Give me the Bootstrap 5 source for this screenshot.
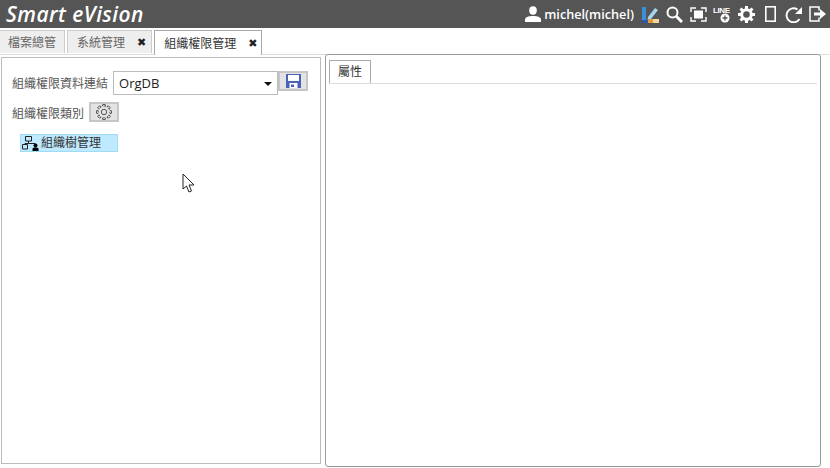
<!DOCTYPE html>
<html lang="zh-Hant"><head><meta charset="utf-8">
<link href="https://cdn.jsdelivr.net/npm/bootstrap@5.3.0/dist/css/bootstrap.min.css" rel="stylesheet">
<script src="https://cdn.jsdelivr.net/npm/bootstrap@5.3.0/dist/js/bootstrap.bundle.min.js"></script>
<style>
html,body{height:100%;overflow:hidden}
body{font-family:"Open Sans","Noto Sans CJK TC",sans-serif;font-size:12px;color:#333;background:#fff;line-height:1.2}
.top-bar{height:28px;background:#555;color:#fff}
.brand-name{font:italic 600 21px/29px "Open Sans",sans-serif;padding-left:6px;letter-spacing:.45px}
.user-name{font:600 12.7px "Open Sans",sans-serif;color:#fff;margin-left:3px;margin-right:4px;white-space:nowrap}
.tool-cell{width:24px;height:28px;display:flex;align-items:center;justify-content:center;flex:none}
.tool-ic{display:block;flex:none}
.tab-row{height:25px;margin-top:2px;gap:2px;border-bottom:1px solid #ddd}
.tab-item{height:23px;background:#eee;border:1px solid #ccc;border-bottom:0;color:#666;padding:0 5px 0 9px;line-height:21px;display:flex;gap:12px;align-items:center}
.tab-first{margin-left:-1px;padding:0 8px}
.tab-item.on{background:#fff;border-color:#aaa;color:#333;height:25px;position:relative;padding:0 4px 0 9px}
.tab-close{font:700 11px "DejaVu Sans",sans-serif;color:#222}
.work-row{height:412px;padding:0 0 0 1px;gap:4px}
.left-pane{width:320px;height:407px;border:1px solid #bbb;padding:13px 10px 0 10px;margin-top:2px}
.right-pane{width:496px;height:413px;border:1px solid #999;border-radius:3px;padding:5px 3px 0 3px;margin-top:-1px;position:relative}
.field-lab{color:#555;white-space:nowrap}
.lab-one{padding-top:2px}
.lab-two{padding-top:4px}
.select-box{width:165px;height:24px;border:1px solid #bbb;background:#fff;margin-left:5px;padding:2px 5px 0;font-size:13px;color:#222}
.select-arrow{width:0;height:0;border-left:4px solid transparent;border-right:4px solid transparent;border-top:4px solid #111}
.icon-box{background:#e3e3e3;border:2px solid #c6c6c6;display:flex;align-items:center;justify-content:center}
.save-box{width:30px;height:20px;align-self:flex-start}
.gear-box{width:30px;height:20px;margin-left:5px}
.tree-node{width:98px;height:18px;background:#bfe9ff;border:1px solid #9fdcf5;margin:12px 0 0 8px;gap:2px;padding-left:1px;color:#333}
.prop-tabs{height:24px;border-bottom:1px solid #ddd}
.prop-tab{width:42px;height:23px;border:1px solid #aaa;border-bottom:0;text-align:center;line-height:21px;color:#333}
.row-one{height:24px}
.row-two{height:20px;margin-top:7px}
.cursor-ic{position:absolute;left:182px;top:173px}
</style></head><body>
<header class="top-bar d-flex align-items-center">
<div class="brand-name flex-grow-1">Smart eVision</div>
<svg class="tool-ic" width="16" height="16" viewBox="0 0 16 16"><ellipse cx="8" cy="4.500" rx="3.800" ry="4.200" fill="#fff"/><path d="M0 16v-2c0-3 3-4 8-4s8 1 8 4v2z" fill="#fff"/></svg>
<span class="user-name">michel(michel)</span>
<div class="d-flex align-items-center">
<span class="tool-cell"><svg class="tool-ic" width="17" height="17" viewBox="0 0 17 17"><path d="M0 1h4v15H0z" fill="#3b8fd6"/><path d="m6 11 7-9 3 2-7 9-3.500 1z" fill="#a8d4ee"/><path d="M6 13h5v4H6z" fill="#e09a3c"/><path d="M11 13h6v4h-6z" fill="#f0d8a0"/><path d="M0 14h6v3H0z" fill="#2f57a8"/></svg></span>
<span class="tool-cell"><svg class="tool-ic" width="17" height="17" viewBox="0 0 17 17"><circle cx="6.500" cy="6.500" r="5" fill="none" stroke="#fff" stroke-width="2"/><path d="m10.500 10.500 5.500 5.500" stroke="#fff" stroke-width="3"/></svg></span>
<span class="tool-cell"><svg class="tool-ic" width="17" height="15" viewBox="0 0 17 15"><path d="M1 5V1h5M11 1h5v4M16 10v4h-5M6 14H1v-4" fill="none" stroke="#fff" stroke-width="1.400"/><path d="M4 3.500h9v8H4z" fill="#fff"/></svg></span>
<span class="tool-cell"><svg class="tool-ic" width="18" height="17" viewBox="0 0 18 17"><text x="0" y="7" font-size="8" font-weight="700" fill="#fff" font-family="Liberation Sans" textLength="17">LINE</text><circle cx="12" cy="12" r="4.500" fill="#fff"/><path d="M12 9.500v5M9.500 12h5" stroke="#555" stroke-width="1.300"/></svg></span>
<span class="tool-cell"><svg class="tool-ic" width="17" height="17" viewBox="0 0 17 17"><circle cx="8.500" cy="8.500" r="4.800" fill="none" stroke="#fff" stroke-width="3"/><path d="M8.500 0v3.500M8.500 13.500V17M0 8.500h3.500M13.500 8.500H17M2.500 2.500 5 5M12 12l2.500 2.500M2.500 14.500 5 12M12 5l2.500-2.500" stroke="#fff" stroke-width="3"/></svg></span>
<span class="tool-cell"><svg class="tool-ic" width="11" height="16" viewBox="0 0 11 16"><rect x=".8" y=".8" width="9.400" height="14.400" fill="none" stroke="#fff" stroke-width="1.600"/></svg></span>
<span class="tool-cell"><svg class="tool-ic" width="18" height="17" viewBox="0 0 18 17"><path d="M14.500 13A7 7 0 1 1 12.500 3.500" fill="none" stroke="#fff" stroke-width="1.900"/><path d="M17 1v7h-7z" fill="#fff"/></svg></span>
<span class="tool-cell"><svg class="tool-ic" width="18" height="16" viewBox="0 0 18 16"><path d="M10 4.500V1H1v14h9v-3.500" fill="none" stroke="#fff" stroke-width="1.500"/><path d="M5 6.500h6V3l6 5-6 5V9.500H5z" fill="#fff"/></svg></span>
</div>
</header>
<nav class="tab-row d-flex">
<div class="tab-item tab-first">檔案總管</div>
<div class="tab-item">系統管理<span class="tab-close">✖</span></div>
<div class="tab-item on">組織權限管理<span class="tab-close">✖</span></div>
</nav>
<main class="work-row d-flex">
<section class="left-pane">
<div class="row-one d-flex">
<span class="field-lab lab-one align-self-center">組織權限資料連結</span>
<div class="select-box d-flex align-items-center justify-content-between">OrgDB<i class="select-arrow"></i></div>
<div class="icon-box save-box"><svg width="15" height="14" viewBox="0 0 15 14"><path d="M0 0h15v14H0z" fill="#4a63b8"/><path d="M2 1h11v6H2z" fill="#fff"/><path d="M3.500 9h8v5h-8z" fill="#fff"/><path d="M5 10.500h3V13H5z" fill="#4a63b8"/></svg></div>
</div>
<div class="row-two d-flex align-items-center">
<span class="field-lab lab-two">組織權限類別</span>
<div class="icon-box gear-box"><svg width="16" height="16" viewBox="0 0 16 16" fill="none" stroke="#333" stroke-width=".8"><defs><path id="gear-tooth" d="M6.300 2.300 6.800.5h2.400l.5 1.800"/></defs><circle cx="8" cy="8" r="2.700"/><circle cx="8" cy="8" r="5.800" stroke-dasharray="1.900 2.650" stroke-dashoffset="1"/><use href="#gear-tooth"/><use href="#gear-tooth" transform="rotate(45 8 8)"/><use href="#gear-tooth" transform="rotate(90 8 8)"/><use href="#gear-tooth" transform="rotate(135 8 8)"/><use href="#gear-tooth" transform="rotate(180 8 8)"/><use href="#gear-tooth" transform="rotate(225 8 8)"/><use href="#gear-tooth" transform="rotate(270 8 8)"/><use href="#gear-tooth" transform="rotate(315 8 8)"/></svg></div>
</div>
<div class="tree-node d-flex align-items-center">
<svg width="17" height="15" viewBox="0 0 17 15"><path d="M3.500.5h6v4.500h-6zM.5 8.500h5v4.500h-5z" fill="none" stroke="#222"/><path d="M6.500 5v2.500H3V8.500M6.500 7.500H13.500" fill="none" stroke="#222"/><circle cx="13.500" cy="9.500" r="2" fill="#000"/><path d="M10.500 15v-2.500l1.500-1h3l1.500 1V15z" fill="#000"/></svg>
<span>組織樹管理</span></div>
</section>
<section class="right-pane">
<div class="prop-tabs"><div class="prop-tab">屬性</div></div>
</section>
</main>
<svg class="cursor-ic" width="13" height="20" viewBox="0 0 13 20"><path d="M1 1v15l3.500-3 2.500 6 2.500-1-2.500-6h5z" fill="#fff" stroke="#222" stroke-width="1"/></svg>
</body></html>
